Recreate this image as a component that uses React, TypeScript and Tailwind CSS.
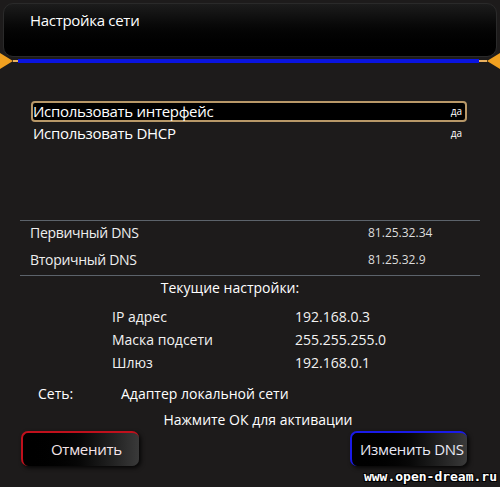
const font = "font-['Open_Sans','Noto_Sans',sans-serif]";

function Row({ label, value }: { label: string; value: string }) {
  return (
    <div className="flex h-[23px] items-center">
      <span className="w-[183px] text-[14px] text-[#f2f2f2]">{label}</span>
      <span className="text-[14px] text-[#f2f2f2]">{value}</span>
    </div>
  );
}

export default function App() {
  return (
    <div className={`relative w-[500px] h-[487px] overflow-hidden bg-[#1d1b1b] ${font}`}>
      {/* Шапка */}
      <div className="mx-[3px] mt-[3px] h-[54px] rounded-[10px] border border-[#2a2a2a] bg-gradient-to-b from-[#1c1c1c] via-[#050505] to-black px-[26px] pt-[4px]">
        <span className="text-[15px] text-white tracking-[-0.3px]">Настройка сети</span>
      </div>

      {/* Синяя линия с оранжевыми уголками */}
      <div className="mt-[1px] flex h-[6px] items-center">
        <div className="h-0 w-0 border-y-[8px] border-y-transparent border-l-[13px] border-l-[#f0a020]" />
        <div className="h-[2px] w-[5px] bg-[#e8b060]" />
        <div className="h-[4px] flex-1 bg-[#0a14e0]" />
        <div className="h-[2px] w-[8px] bg-[#e8b060]" />
        <div className="h-0 w-0 border-y-[8px] border-y-transparent border-r-[13px] border-r-[#f0a020]" />
      </div>

      {/* Параметры */}
      <div className="mt-[37px] ml-[31px] mr-[33px]">
        <div className="flex h-[21px] items-center justify-between rounded-[4px] border-2 border-[#b89868] bg-black pr-[3px]">
          <span className="text-[15px] text-white tracking-[-0.3px]">Использовать интерфейс</span>
          <span className="text-[10px] text-white">да</span>
        </div>
        <div className="flex h-[23px] items-center justify-between pl-[2px] pr-[5px]">
          <span className="text-[15px] text-white tracking-[-0.3px]">Использовать DHCP</span>
          <span className="text-[10px] text-white">да</span>
        </div>
      </div>

      {/* DNS */}
      <div className="mt-[75px] mx-[20px] border-t border-[#5c636b]">
        <div className="flex h-[23px] items-center pl-[10px]">
          <span className="w-[338px] text-[14px] text-[#eeeeee] tracking-[-0.3px]">Первичный DNS</span>
          <span className="text-[12px] text-[#dddddd]">81.25.32.34</span>
        </div>
        <div className="flex h-[31px] items-center pl-[10px]">
          <span className="w-[338px] text-[14px] text-[#eeeeee] tracking-[-0.3px]">Вторичный DNS</span>
          <span className="text-[12px] text-[#dddddd]">81.25.32.9</span>
        </div>
        <div className="border-t border-[#5c636b]" />
      </div>

      {/* Текущие настройки */}
      <div className="mt-[1px] pr-[40px] text-center text-[14px] text-white leading-[22px]">Текущие настройки:</div>
      <div className="mt-[6px] ml-[112px]">
        <Row label="IP адрес" value="192.168.0.3" />
        <Row label="Маска подсети" value="255.255.255.0" />
        <Row label="Шлюз" value="192.168.0.1" />
      </div>

      <div className="mt-[8px] flex h-[22px] items-center pl-[38px]">
        <span className="w-[83px] text-[14px] text-white">Сеть:</span>
        <span className="text-[14px] text-white">Адаптер локальной сети</span>
      </div>

      <div className="mt-[6px] pl-[16px] text-center text-[14px] leading-[20px] text-white">Нажмите ОК для активации</div>

      {/* Кнопки */}
      <div className="mt-[1px] flex justify-between pl-[21px] pr-[33px]">
        <div className="flex h-[35px] w-[118px] items-center rounded-[7px] border-l-2 border-t-2 border-[#c0101c] bg-gradient-to-r from-black via-[#080808] to-[#3a3a3a] pl-[28px] shadow-[2px_2px_4px_rgba(0,0,0,0.8)]">
          <span className="text-[15px] text-[#f4e4e8] tracking-[-0.3px]">Отменить</span>
        </div>
        <div className="flex h-[35px] w-[117px] items-center rounded-[7px] border-l-2 border-t-2 border-[#1a1ae8] bg-gradient-to-r from-black via-[#080808] to-[#3a3a3a] pl-[8px] shadow-[2px_2px_4px_rgba(0,0,0,0.8)]">
          <span className="text-[15px] text-[#e8e8f4] tracking-[-0.3px]">Изменить DNS</span>
        </div>
      </div>

      {/* Водяной знак */}
      <div className="absolute right-[3px] bottom-[1px] font-['DejaVu_Sans_Mono',monospace] text-[13px] font-bold text-white [text-shadow:1px_1px_0_#000,-1px_-1px_0_#000,1px_-1px_0_#000,-1px_1px_0_#000]">
        www.open-dream.ru
      </div>
    </div>
  );
}
